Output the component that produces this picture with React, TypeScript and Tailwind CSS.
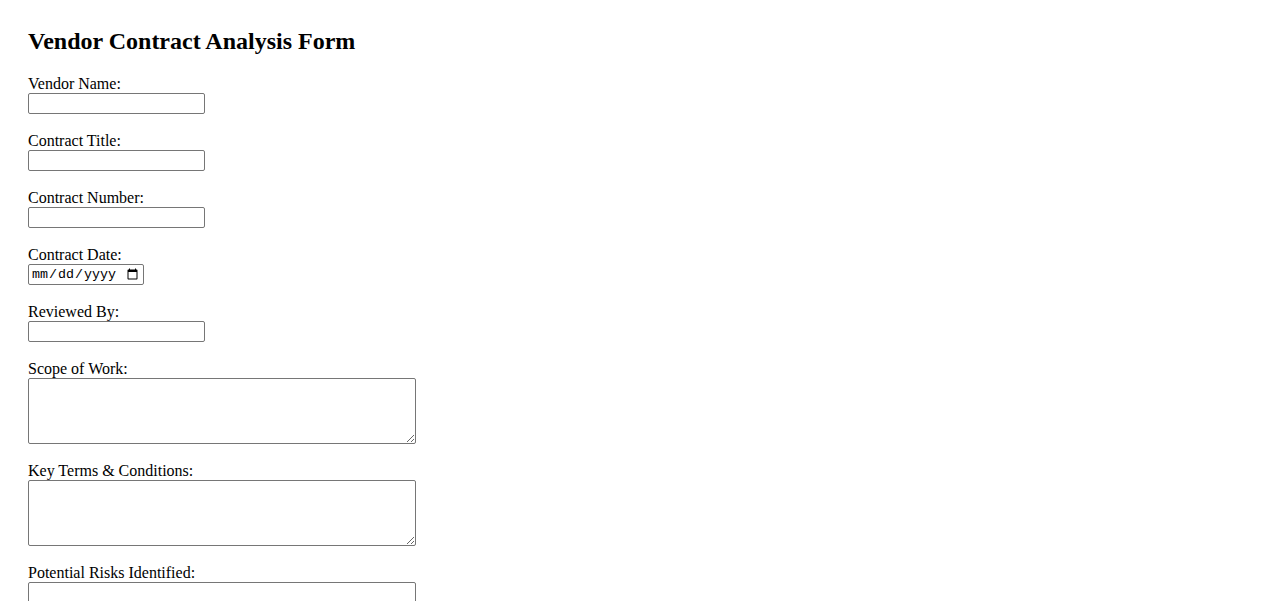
import React from "react";

const inputCls =
  "block w-[177px] h-[21px] border border-[#767676] rounded-[2px] px-[2px] bg-white text-[13.33px] font-['Liberation_Sans',sans-serif]";
const areaCls =
  "block w-[388px] h-[66px] border border-[#767676] rounded-[2px] p-[2px] bg-white text-[13.33px] font-['Liberation_Mono',monospace]";

function Field({ label, children }: { label: string; children: React.ReactNode }) {
  return (
    <div className="mb-[18px]">
      <label className="block leading-[18px] h-[18px] text-[16px]">{label}</label>
      {children}
    </div>
  );
}

export default function App() {
  return (
    <div className="min-h-screen bg-white text-black font-['Liberation_Serif','Times_New_Roman',serif] pl-[28px] pt-[27px]">
      <h2 className="text-[24px] font-bold leading-[28px] mb-[20px]">Vendor Contract Analysis Form</h2>
      <form>
        <Field label="Vendor Name:">
          <input type="text" className={inputCls} />
        </Field>
        <Field label="Contract Title:">
          <input type="text" className={inputCls} />
        </Field>
        <Field label="Contract Number:">
          <input type="text" className={inputCls} />
        </Field>
        <Field label="Contract Date:">
          <input
            type="date"
            className="block w-[116px] h-[21px] border border-[#767676] rounded-[2px] px-[2px] bg-white text-[13.33px] font-['Liberation_Mono',monospace]"
          />
        </Field>
        <Field label="Reviewed By:">
          <input type="text" className={inputCls} />
        </Field>
        <Field label="Scope of Work:">
          <textarea className={areaCls} />
        </Field>
        <Field label="Key Terms & Conditions:">
          <textarea className={areaCls} />
        </Field>
        <Field label="Potential Risks Identified:">
          <textarea className={areaCls} />
        </Field>
      </form>
    </div>
  );
}
